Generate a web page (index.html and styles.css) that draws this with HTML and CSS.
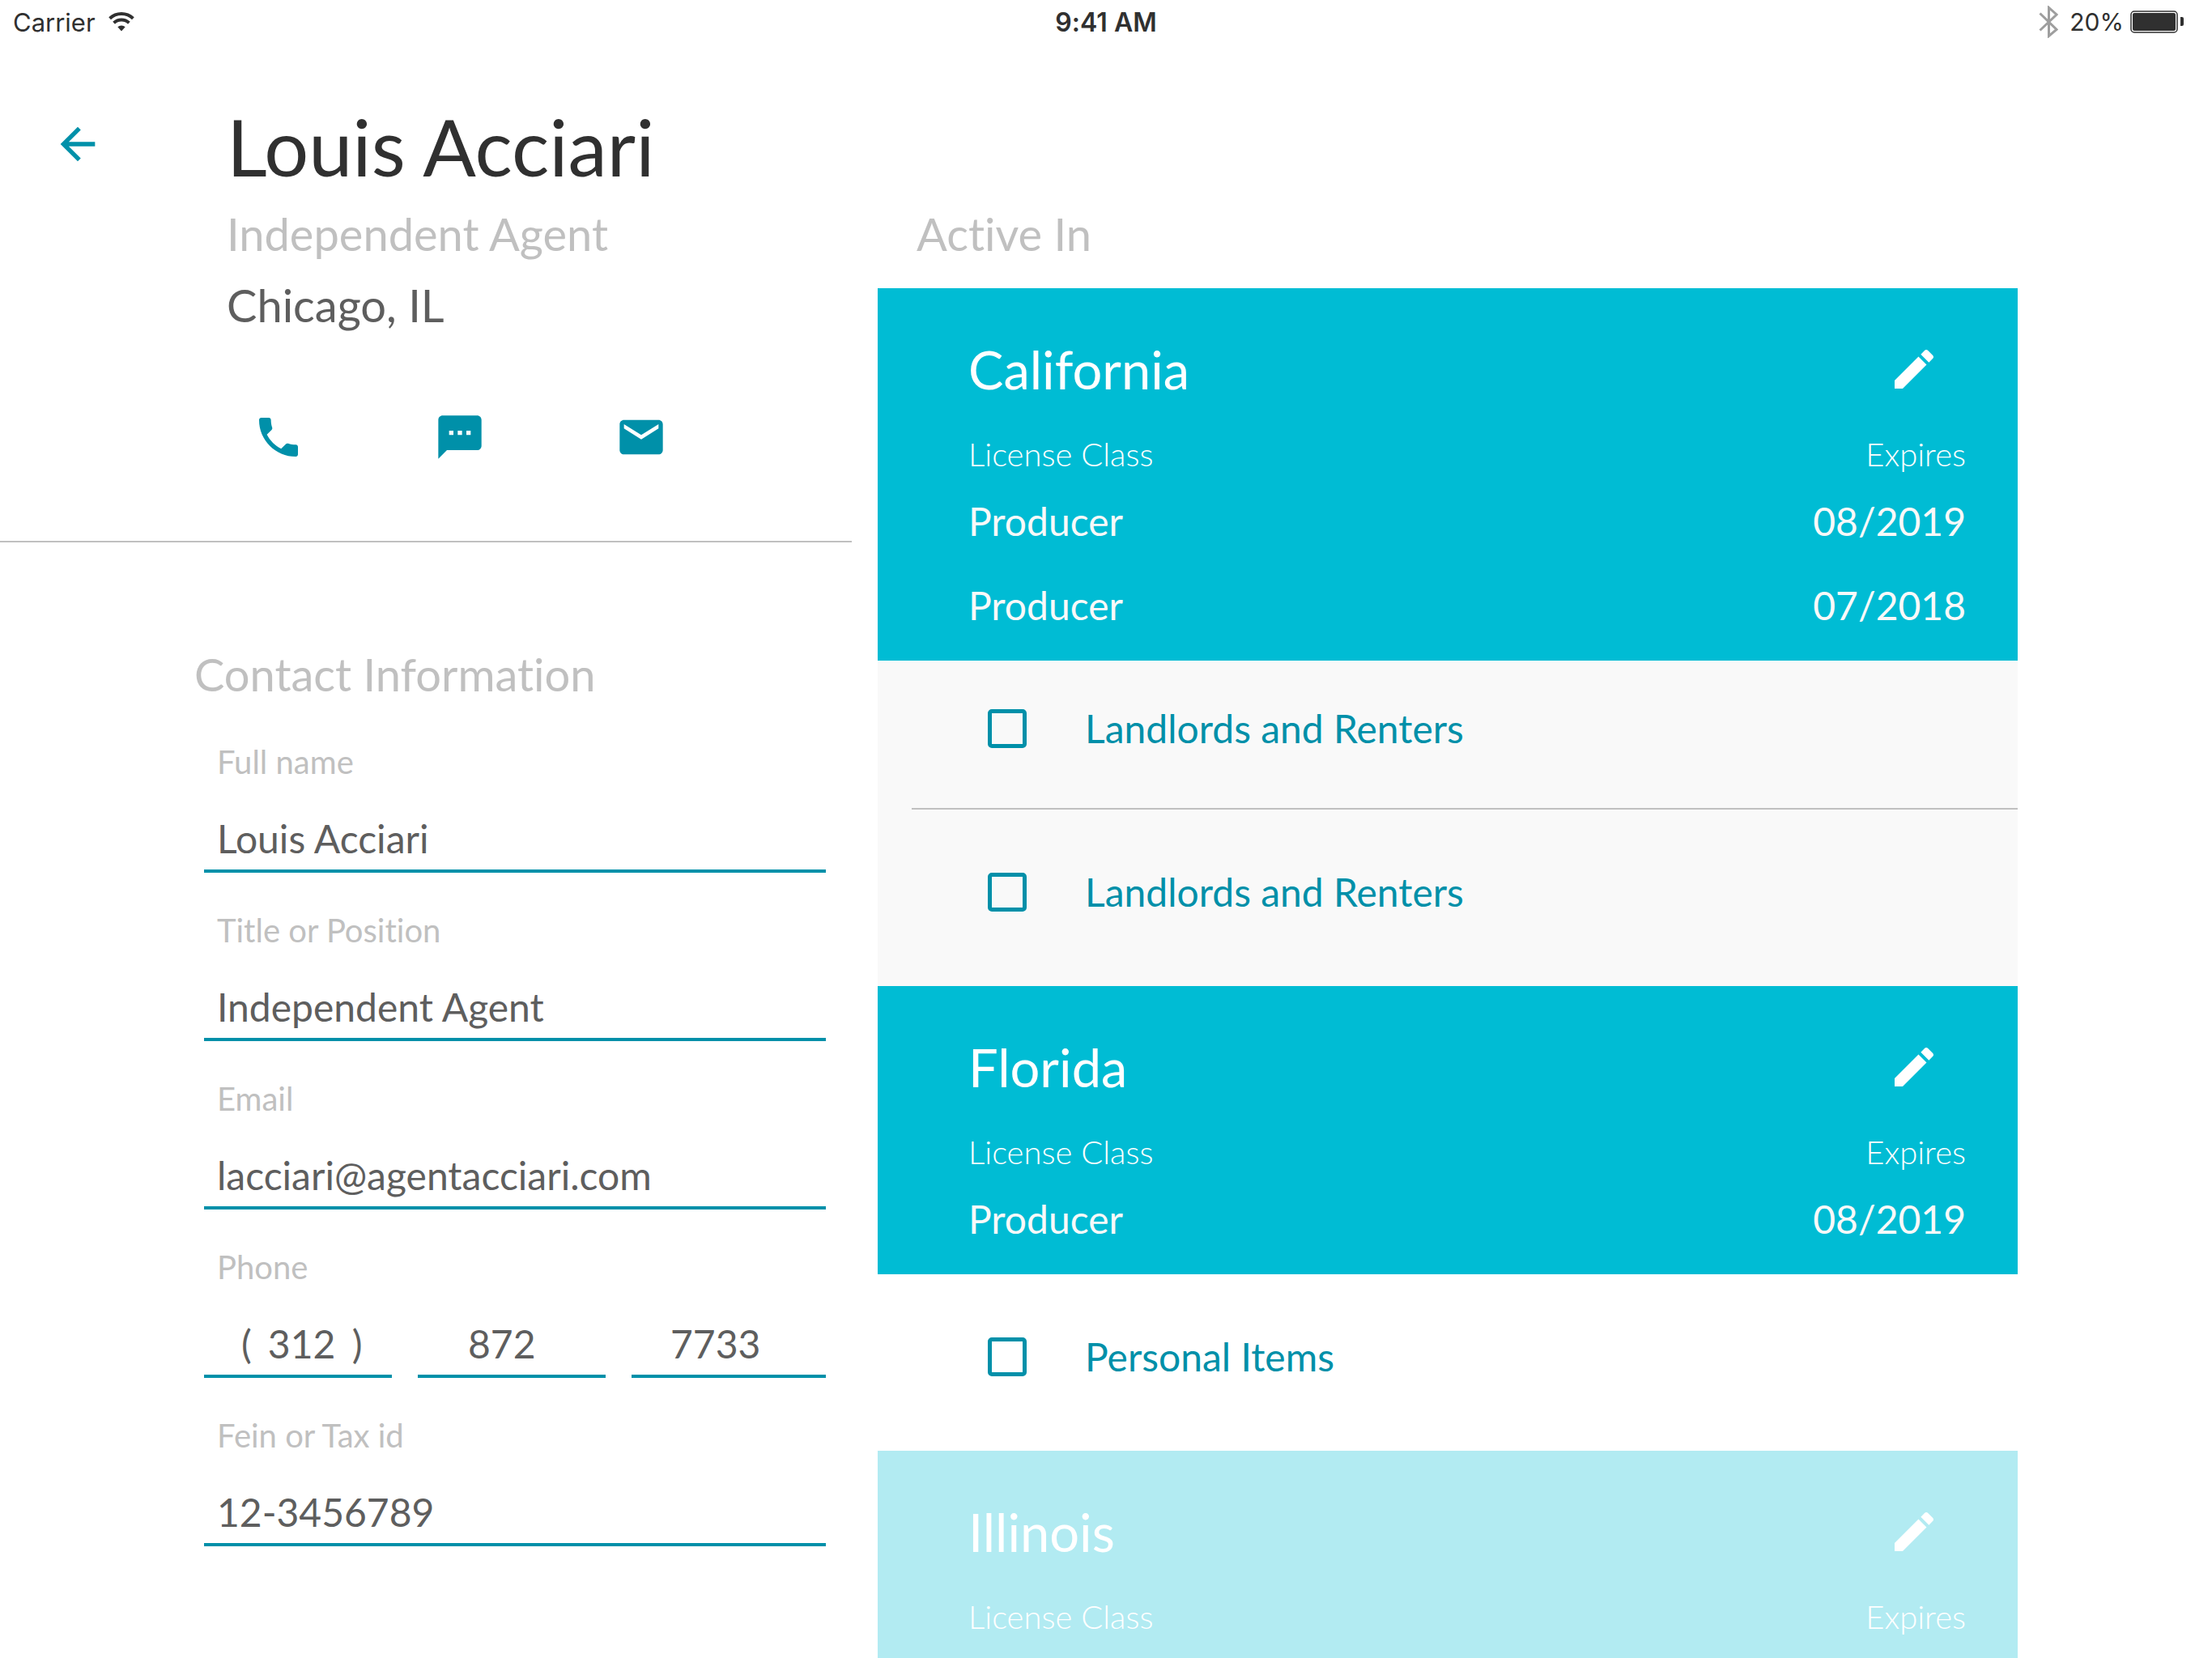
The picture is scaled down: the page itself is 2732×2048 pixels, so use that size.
FILE: index.html
```html
<!DOCTYPE html>
<html lang="en">
<head>
<meta charset="utf-8">
<meta name="viewport" content="width=device-width, initial-scale=1">
<title>Louis Acciari</title>
<link rel="stylesheet" href="styles.css">
</head>
<body>
<svg class="sprite" aria-hidden="true">
  <symbol id="icon-edit" viewBox="0 0 24 24"><path d="M3 17.25V21h3.75L17.81 9.94l-3.75-3.75L3 17.25zM20.71 7.04c.39-.39.39-1.02 0-1.41l-2.34-2.34c-.39-.39-1.02-.39-1.41 0l-1.83 1.83 3.75 3.75 1.83-1.83z"/></symbol>
</svg>
<div class="app">
  <header class="status">
    <div class="status-side">
      <span>Carrier</span>
      <svg class="wifi" viewBox="0 0 32 24" aria-hidden="true">
        <path d="M16 23.6l-4.7-5.4a7 7 0 0 1 9.4 0z" fill="currentColor"/>
        <path d="M6.6 13.2a13.6 13.6 0 0 1 18.8 0" fill="none" stroke="currentColor" stroke-width="4"/>
        <path d="M1.6 7.8a20.8 20.8 0 0 1 28.8 0" fill="none" stroke="currentColor" stroke-width="4"/>
      </svg>
    </div>
    <time class="clock">9:41 AM</time>
    <div class="status-side status-right">
      <svg class="bluetooth" viewBox="0 0 24 40" aria-hidden="true"><path d="M1.5 9.5L22 29.5 12.5 37.5V2.5L22 11 1.5 30.5" fill="none" stroke="currentColor" stroke-width="3"/></svg>
      <span class="charge">20%</span>
      <svg class="battery" viewBox="0 0 66 28" aria-hidden="true">
        <rect x="1" y="1" width="57" height="26" rx="4" fill="none" stroke="currentColor" stroke-width="1.5"/>
        <rect x="3" y="3" width="53" height="22" rx="2" fill="currentColor"/>
        <path d="M62 8h2a2 2 0 0 1 2 2v7a2 2 0 0 1-2 2h-2z" fill="currentColor"/>
      </svg>
    </div>
  </header>

  <main class="columns">
    <section class="profile">
      <div class="intro">
        <button class="icon-button back" type="button" aria-label="Back">
          <svg viewBox="0 0 24 24"><path d="M20 11H7.83l5.59-5.59L12 4l-8 8 8 8 1.41-1.41L7.83 13H20v-2z"/></svg>
        </button>
        <div class="identity">
          <h1 class="name">Louis Acciari</h1>
          <p class="role">Independent Agent</p>
          <p class="place">Chicago, IL</p>
          <div class="actions">
            <button class="icon-button" type="button" aria-label="Call">
              <svg viewBox="0 0 24 24"><path d="M6.62 10.79c1.44 2.83 3.76 5.14 6.59 6.59l2.2-2.2c.27-.27.67-.36 1.02-.24 1.12.37 2.33.57 3.57.57.55 0 1 .45 1 1V20c0 .55-.45 1-1 1-9.39 0-17-7.61-17-17 0-.55.45-1 1-1h3.5c.55 0 1 .45 1 1 0 1.25.2 2.45.57 3.57.11.35.03.74-.25 1.02l-2.2 2.2z"/></svg>
            </button>
            <button class="icon-button" type="button" aria-label="Message">
              <svg viewBox="0 0 24 24"><path d="M20 2H4c-1.1 0-1.99.9-1.99 2L2 22l4-4h14c1.1 0 2-.9 2-2V4c0-1.1-.9-2-2-2zM9 11H7V9h2v2zm4 0h-2V9h2v2zm4 0h-2V9h2v2z"/></svg>
            </button>
            <button class="icon-button" type="button" aria-label="Mail">
              <svg viewBox="0 0 24 24"><path d="M20 4H4c-1.1 0-1.99.9-1.99 2L2 18c0 1.1.9 2 2 2h16c1.1 0 2-.9 2-2V6c0-1.1-.9-2-2-2zm0 4l-8 5-8-5V6l8 5 8-5v2z"/></svg>
            </button>
          </div>
        </div>
      </div>

      <form class="contact">
        <h2 class="section-title">Contact Information</h2>
        <div class="fields">
          <div class="field">
            <label for="full-name">Full name</label>
            <input id="full-name" type="text" value="Louis Acciari">
          </div>
          <div class="field">
            <label for="position">Title or Position</label>
            <input id="position" type="text" value="Independent Agent">
          </div>
          <div class="field">
            <label for="email">Email</label>
            <input id="email" type="email" value="lacciari@agentacciari.com">
          </div>
          <div class="field">
            <label for="area">Phone</label>
            <div class="phone">
              <div class="area">
                <span>(</span>
                <input id="area" type="text" value="312">
                <span>)</span>
              </div>
              <input class="exchange" type="text" value="872" aria-label="Exchange">
              <input class="line-number" type="text" value="7733" aria-label="Line number">
            </div>
          </div>
          <div class="field">
            <label for="tax-id">Fein or Tax id</label>
            <input id="tax-id" type="text" value="12-3456789">
          </div>
        </div>
      </form>
    </section>

    <section class="states">
      <h2 class="section-title states-title">Active In</h2>

      <article class="card">
        <div class="card-head">
          <h3 class="card-title">California</h3>
          <button class="icon-button edit" type="button" aria-label="Edit California"><svg><use href="#icon-edit"/></svg></button>
        </div>
        <table class="licenses">
          <thead><tr><th>License Class</th><th>Expires</th></tr></thead>
          <tbody>
            <tr><td>Producer</td><td>08/2019</td></tr>
            <tr><td>Producer</td><td>07/2018</td></tr>
          </tbody>
        </table>
      </article>
      <ul class="lines lines-shaded">
        <li class="line line-divided"><label><input type="checkbox"><span>Landlords and Renters</span></label></li>
        <li class="line"><label><input type="checkbox"><span>Landlords and Renters</span></label></li>
      </ul>

      <article class="card">
        <div class="card-head">
          <h3 class="card-title">Florida</h3>
          <button class="icon-button edit" type="button" aria-label="Edit Florida"><svg><use href="#icon-edit"/></svg></button>
        </div>
        <table class="licenses">
          <thead><tr><th>License Class</th><th>Expires</th></tr></thead>
          <tbody>
            <tr><td>Producer</td><td>08/2019</td></tr>
          </tbody>
        </table>
      </article>
      <ul class="lines">
        <li class="line"><label><input type="checkbox"><span>Personal Items</span></label></li>
      </ul>

      <article class="card card-faded">
        <div class="card-head">
          <h3 class="card-title">Illinois</h3>
          <button class="icon-button edit" type="button" aria-label="Edit Illinois"><svg><use href="#icon-edit"/></svg></button>
        </div>
        <table class="licenses">
          <thead><tr><th>License Class</th><th>Expires</th></tr></thead>
        </table>
      </article>
    </section>
  </main>
</div>
</body>
</html>
```
FILE: styles.css
```css
:root {
  --ink: #303030;
  --text: #5e5e5e;
  --muted: #c0c0c0;
  --teal: #0090a9;
  --cyan: #00bcd4;
  --shade: #f9f9f9;
}

* { box-sizing: border-box; }

body {
  margin: 0;
  background: #fff;
  color: var(--text);
  font-family: Lato, "Liberation Sans", sans-serif;
  font-size: 48px;
  font-variant-ligatures: none;
}

h1, h2, h3, p, ul { margin: 0; padding: 0; font-weight: 400; }
ul { list-style: none; }

.sprite { position: absolute; width: 0; height: 0; }

.app {
  display: flex;
  flex-direction: column;
  height: 100vh;
  overflow: hidden;
}

/* Status bar */
.status {
  display: grid;
  grid-template-columns: 1fr auto 1fr;
  align-items: center;
  flex: none;
  height: 54px;
  padding: 0 16px;
  color: var(--ink);
  font-family: Inter, "Liberation Sans", sans-serif;
  font-size: 31px;
}
.status-side { display: flex; align-items: center; gap: 16px; }
.status-right { justify-content: flex-end; gap: 8px; padding-right: 19px; }
.wifi { width: 32px; height: 24px; }
.bluetooth { width: 24px; height: 40px; margin-right: 6px; color: #9e9e9e; }
.charge { font-size: 30px; }
.battery { width: 66px; height: 28px; }
.clock { font-size: 32px; font-weight: 600; }

/* Two panes that share the window width */
.columns {
  display: grid;
  grid-template-columns: 1052fr 1408fr;
  gap: 32px;
  flex: 1;
  min-height: 0;
  padding-right: 240px;
}

.icon-button {
  flex: none;
  width: 64px;
  height: 64px;
  padding: 0;
  border: 0;
  background: none;
  color: var(--teal);
}
.icon-button svg { display: block; width: 64px; height: 64px; fill: currentColor; }

/* Profile */
.intro {
  display: flex;
  align-items: flex-start;
  gap: 152px;
  padding: 66px 0 96px 64px;
  border-bottom: 2px solid var(--muted);
}
.back { margin-top: 26px; }
.name { margin-bottom: 3px; color: var(--ink); font-size: 97px; line-height: 122px; }
.role, .place { font-size: 56px; line-height: 88px; }
.role { color: var(--muted); }
.actions { display: flex; gap: 160px; padding: 87px 0 0 32px; }

.section-title { color: var(--muted); font-size: 56px; line-height: 68px; }

/* Contact form */
.contact { padding: 129px 32px 0 240px; }
.fields { display: grid; gap: 47px; padding: 50px 0 0 12px; }
.field { display: flex; flex-direction: column; }
.field label { padding-left: 16px; color: var(--muted); font-size: 40px; line-height: 48px; }
.field input {
  width: 100%;
  min-width: 0;
  height: 113px;
  padding: 31px 16px 0;
  border: 0;
  border-bottom: 4px solid var(--teal);
  border-radius: 0;
  background: none;
  color: var(--text);
  font: inherit;
}
.phone { display: grid; grid-template-columns: 232fr 232fr 240fr; gap: 32px; }
.area {
  display: flex;
  align-items: center;
  gap: 20px;
  padding: 31px 0 0 46px;
  border-bottom: 4px solid var(--teal);
}
.area input { width: 84px; height: 78px; padding: 0; border: 0; }
.field .exchange { padding-left: 62px; }
.field .line-number { padding-left: 48px; }

/* Licensed states */
.states { display: flex; flex-direction: column; min-height: 0; padding-top: 201px; }
.states > * { flex: none; }
.states-title { padding: 0 0 33px 48px; }

.card { padding: 60px 64px 16px 112px; background: var(--cyan); color: #fff; }
.states > .card-faded { flex: 1 0 auto; background: #b2ebf2; }
.card-head { display: flex; align-items: center; justify-content: space-between; padding-right: 32px; }
.card-title { font-size: 65px; line-height: 80px; }
.edit { color: #fff; }

.licenses { width: 100%; margin-top: 41px; border-collapse: collapse; }
.licenses th, .licenses td { padding: 0; text-align: left; }
.licenses th { padding-bottom: 7px; font-size: 40px; font-weight: 300; line-height: 48px; }
.licenses td { color: var(--shade); line-height: 104px; }
.licenses th:last-child, .licenses td:last-child { text-align: right; }

.lines-shaded { background: var(--shade); }
.line { margin-left: 42px; padding: 70px 0 84px 94px; }
.line-divided { padding-top: 52px; padding-bottom: 66px; border-bottom: 2px solid var(--muted); }
.line label { display: flex; align-items: center; gap: 72px; color: var(--teal); line-height: 64px; }
.line input {
  flex: none;
  width: 48px;
  height: 48px;
  margin: 0;
  border: 5px solid var(--teal);
  border-radius: 5px;
  appearance: none;
}
.line input:checked { background: var(--teal); }
```
